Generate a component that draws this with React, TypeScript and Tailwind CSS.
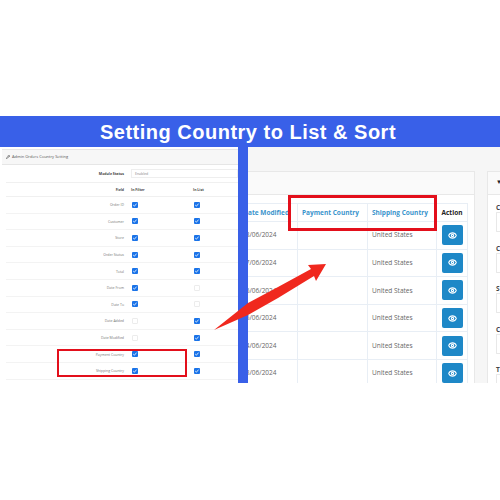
import { Eye, Pencil } from "lucide-react";

const settingRows = [
  { name: "Order ID", filter: true, list: true },
  { name: "Customer", filter: true, list: true },
  { name: "Store", filter: true, list: true },
  { name: "Order Status", filter: true, list: true },
  { name: "Total", filter: true, list: true },
  { name: "Date From", filter: true, list: false },
  { name: "Date To", filter: true, list: false },
  { name: "Date Added", filter: false, list: true },
  { name: "Date Modified", filter: false, list: true },
  { name: "Payment Country", filter: true, list: true },
  { name: "Shipping Country", filter: true, list: true },
];

const orderDates = ["08/06/2024", "07/06/2024", "06/06/2024", "05/06/2024", "04/06/2024", "03/06/2024"];

const filterLabels = ["C", "C", "S", "C", "T"];

const Check = ({ on }: { on: boolean }) =>
  on ? (
    <span className="flex h-[6px] w-[6px] items-center justify-center rounded-[1px] bg-[#1a73e8]">
      <svg viewBox="0 0 6 6" className="h-[6px] w-[6px]">
        <path d="M1.2 3l1.2 1.2 2.2-2.6" fill="none" stroke="#fff" strokeWidth="0.8" />
      </svg>
    </span>
  ) : (
    <span className="block h-[6px] w-[6px] rounded-[1px] border border-[#ececec] bg-white" />
  );

const SettingsPanel = () => (
  <div className="flex w-[238px] shrink-0 flex-col overflow-hidden bg-white pt-[2px] pl-[2px]">
    <div className="flex h-[16px] shrink-0 items-center gap-[2px] border-y border-[#e6e6e6] bg-[#f7f7f7] pl-[4px] text-[4px] text-[#555]">
      <Pencil size={4} strokeWidth={3} color="#333" />
      Admin Orders Country Setting
    </div>
    <div className="flex-1 bg-white pl-[4px]">
      <div className="flex h-[18px] items-center border-b border-[#f0f0f0]">
        <span className="w-[118px] text-right text-[3.5px] font-bold text-[#444]">Module Status</span>
        <span className="ml-[7px] flex h-[9px] flex-1 items-center border border-[#eee] pl-[3px] text-[3.5px] text-[#888]">
          Enabled
        </span>
      </div>
      <div className="flex h-[14px] items-center border-b border-[#f0f0f0] text-[3.5px] font-bold text-[#444]">
        <span className="w-[118px] text-right">Field</span>
        <span className="ml-[7px] w-[62px]">In Filter</span>
        <span>In List</span>
      </div>
      {settingRows.map((row) => (
        <div key={row.name} className="flex h-[16.6px] items-center border-b border-[#f3f3f3]">
          <span className="w-[118px] text-right text-[3.5px] text-[#777]">{row.name}</span>
          <span className="ml-[8px] w-[62px]">
            <Check on={row.filter} />
          </span>
          <Check on={row.list} />
        </div>
      ))}
    </div>
  </div>
);

const OrdersPanel = () => (
  <div className="flex min-w-0 flex-1 flex-col overflow-hidden bg-[#f6f6f6] pt-[24px]">
    <div className="ml-[-10px] flex flex-1">
      <div className="h-[260px] w-[237px] shrink-0 border border-[#e8e8e8] bg-white">
        <div className="h-[23px] border-b border-[#e8e8e8] bg-[#fafafa]" />
        <div className="mt-[8px] w-[229px] border-y border-r border-[#e8eef5]">
          <div className="flex h-[18px] items-center border-b border-[#e8eef5] text-[6.5px] font-bold text-[#3a94cc]">
            <span className="flex w-[58px] shrink-0 justify-end pr-[8px] whitespace-nowrap">Date Modified</span>
            <span className="flex h-full w-[70px] shrink-0 items-center border-l border-[#e8eef5] pl-[4px] whitespace-nowrap">
              Payment Country
            </span>
            <span className="flex h-full w-[69px] shrink-0 items-center border-l border-[#e8eef5] pl-[4px] whitespace-nowrap">
              Shipping Country
            </span>
            <span className="flex h-full flex-1 items-center justify-center border-l border-[#e8eef5] text-[#222]">
              Action
            </span>
          </div>
          {orderDates.map((date) => (
            <div
              key={date}
              className="flex h-[27.6px] items-center border-b border-[#e8eef5] text-[6.5px] text-[#666]"
            >
              <span className="w-[58px] shrink-0 pl-[3px] whitespace-nowrap">{date}</span>
              <span className="h-full w-[70px] shrink-0 border-l border-[#e8eef5]" />
              <span className="flex h-full w-[69px] shrink-0 items-center border-l border-[#e8eef5] pl-[4px]">
                United States
              </span>
              <span className="flex h-full flex-1 items-center justify-center border-l border-[#e8eef5]">
                <span className="flex h-[20px] w-[21px] items-center justify-center rounded-[2px] bg-[#1e88c7]">
                  <Eye size={9} strokeWidth={3} color="#fff" />
                </span>
              </span>
            </div>
          ))}
        </div>
      </div>
      <div className="ml-[12px] h-[260px] flex-1 border border-[#e8e8e8] bg-white">
        <div className="h-[23px] border-b border-[#e8e8e8] bg-[#fafafa] pl-[8px] text-[6px] leading-[20px] font-bold text-[#222]">
          ▼
        </div>
        <div className="flex flex-col pt-[8px] pl-[8px]">
          {filterLabels.map((label, i) => (
            <div key={i} className="h-[40.5px]">
              <div className="text-[6.5px] leading-[9px] font-bold text-[#444]">{label}</div>
              <div className="h-[20px] rounded-l-[1px] border-y border-l border-[#e8e8e8]" />
            </div>
          ))}
        </div>
      </div>
    </div>
  </div>
);

export default function App() {
  return (
    <div className="h-[500px] w-[500px] overflow-hidden bg-white pt-[116px] [font-family:'Open_Sans',sans-serif]">
      <div className="relative flex h-[267px] flex-col overflow-hidden">
        <div className="flex h-[31px] shrink-0 items-center justify-center bg-[#3960e8] pr-[4px] text-[20px] font-bold tracking-[0.5px] text-white [font-family:'Liberation_Sans',sans-serif]">
          Setting Country to List &amp; Sort
        </div>
        <div className="flex min-h-0 flex-1">
          <SettingsPanel />
          <div className="relative z-10 w-[10px] shrink-0 bg-[#3960e8]" />
          <OrdersPanel />
        </div>

        {/* Red callouts */}
        <div className="absolute top-[79px] left-[288px] z-20 h-[36px] w-[149px] border-[3px] border-[#e30f1b]" />
        <div className="absolute top-[233px] left-[57px] z-20 h-[28px] w-[130px] border-[2px] border-[#e30f1b]" />
        <svg
          className="absolute top-[140px] left-[200px] z-20"
          width="140"
          height="80"
          viewBox="200 256 140 80"
        >
          <path
            d="M214 330 L248 303 L278 287 L311 269 L308 265 L326 264 L316 281 L314 276 L278 298 L248 315 Z"
            fill="#f0281e"
          />
        </svg>
      </div>
    </div>
  );
}
